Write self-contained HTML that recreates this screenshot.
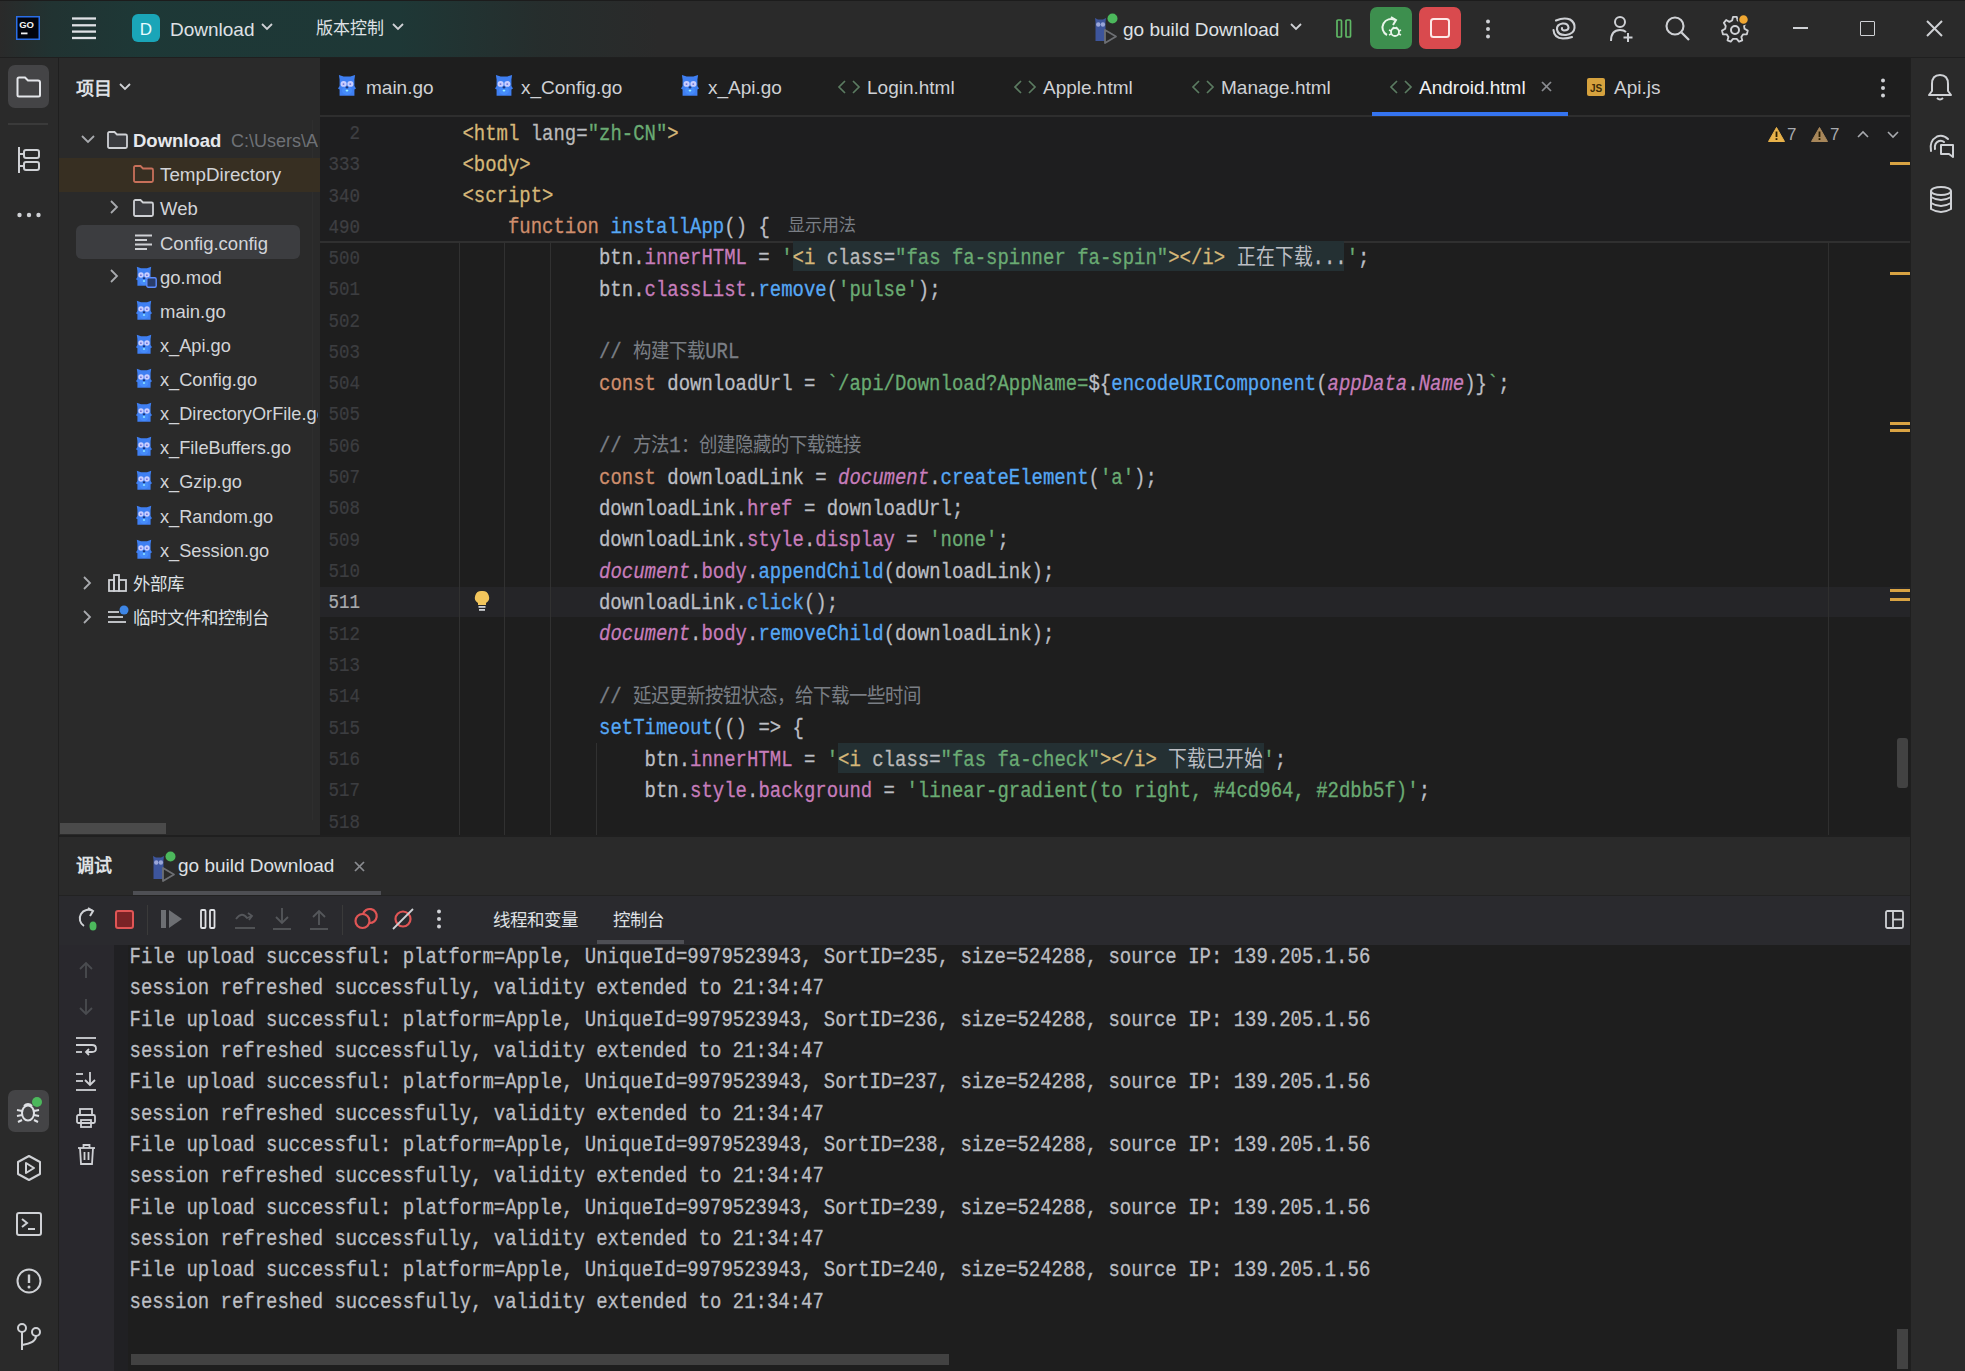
<!DOCTYPE html>
<html lang="zh-CN">
<head>
<meta charset="utf-8">
<style>
*{box-sizing:border-box;margin:0;padding:0}
html,body{width:1965px;height:1371px;overflow:hidden;background:#2a2a2a;font-family:"Liberation Sans",sans-serif;color:#dfe1e5}
.a{position:absolute}
.ui{white-space:nowrap;line-height:1}
.mono{position:absolute;font-family:"Liberation Mono",monospace;font-size:18.98px;white-space:pre;line-height:31px;height:31px;transform:scaleY(1.13);transform-origin:0 19.5px;-webkit-text-stroke:0.25px currentColor}
.mono span{-webkit-text-stroke:0.25px currentColor}
.cjk{font-size:18.4px;-webkit-text-stroke:0 !important}
svg{position:absolute;overflow:visible}
.i{font-style:italic}
</style>
</head>
<body>

<div class="a" style="left:0px;top:0px;width:1965px;height:57px;background:#2a2a2a;"></div>
<div class="a" style="left:0;top:0;width:700px;height:57px;background:linear-gradient(90deg, rgba(42,42,42,0) 0px, rgba(26,58,56,0.55) 50px, rgba(26,60,58,0.78) 140px, rgba(26,60,58,0.75) 400px, rgba(30,52,50,0.35) 540px, rgba(42,42,42,0) 660px)"></div>
<div class="a" style="left:0px;top:0px;width:1965px;height:1px;background:#1c1c1c;"></div>
<div class="a" style="left:0px;top:57px;width:1965px;height:1px;background:#1f1f1f;"></div>
<svg style="left:16px;top:16px;" width="24" height="24" viewBox="0 0 24 24"><rect x="0.75" y="0.75" width="22.5" height="22.5" fill="#02040c" stroke="#2a6ee8" stroke-width="1.5"/><text x="3.2" y="12" font-family="Liberation Sans" font-weight="bold" font-size="9.5" fill="#f2f2f2">GO</text><rect x="5" y="16.5" width="6.5" height="1.8" fill="#f2f2f2"/></svg>
<svg style="left:72px;top:17px;" width="24" height="22" viewBox="0 0 24 22"><g stroke="#dfe1e5" stroke-width="2.3"><line x1="0" y1="1.5" x2="24" y2="1.5"/><line x1="0" y1="8.3" x2="24" y2="8.3"/><line x1="0" y1="14.6" x2="24" y2="14.6"/><line x1="0" y1="21" x2="24" y2="21"/></g></svg>
<svg style="left:132px;top:14px;" width="28" height="28" viewBox="0 0 28 28"><rect x="0" y="0" width="28" height="28" rx="6" fill="#1aa5b8"/><text x="14" y="21" text-anchor="middle" font-family="Liberation Sans" font-size="17" fill="#e8fbff">D</text></svg>
<div class="a ui" style="left:170px;top:20px;font-size:19px;color:#dfe1e5;font-weight:normal;">Download</div>
<svg style="left:261px;top:23px;" width="12" height="8" viewBox="0 0 12 8"><polyline points="1,1 6,6 11,1" fill="none" stroke="#cfd1d5" stroke-width="1.8"/></svg>
<div class="a ui" style="left:316px;top:20px;font-size:17px;color:#dfe1e5;font-weight:normal;">版本控制</div>
<svg style="left:392px;top:23px;" width="12" height="8" viewBox="0 0 12 8"><polyline points="1,1 6,6 11,1" fill="none" stroke="#cfd1d5" stroke-width="1.8"/></svg>
<svg style="left:1092px;top:13px;" width="28" height="30" viewBox="0 0 28 30"><path d="M3 5 L6 6.5 L11 6.5 L14 5 L13.5 9 L13.5 28 L3.5 28 L3.5 9 Z" fill="#3d559c"/><circle cx="6.3" cy="11.5" r="2.2" fill="#9aa6d8"/><circle cx="10.9" cy="11.5" r="2.2" fill="#9aa6d8"/><path d="M13 17 L24 23.5 L13 30Z" fill="#2a2a2a" stroke="#6d6f73" stroke-width="1.8" stroke-linejoin="round"/><circle cx="20.5" cy="5.5" r="5" fill="#4cb85c"/></svg>
<div class="a ui" style="left:1123px;top:20px;font-size:19px;color:#dfe1e5;font-weight:normal;">go build Download</div>
<svg style="left:1290px;top:23px;" width="12" height="8" viewBox="0 0 12 8"><polyline points="1,1 6,6 11,1" fill="none" stroke="#cfd1d5" stroke-width="1.8"/></svg>
<svg style="left:1336px;top:19px;" width="16" height="19" viewBox="0 0 16 19"><rect x="1" y="1" width="4.5" height="17" rx="1" fill="none" stroke="#5fb865" stroke-width="1.7"/><rect x="10" y="1" width="4.5" height="17" rx="1" fill="none" stroke="#5fb865" stroke-width="1.7"/></svg>
<div class="a" style="left:1370px;top:7px;width:42px;height:42px;border-radius:7px;background:#3d8f4e"></div>
<svg style="left:1378px;top:15px;" width="26" height="26" viewBox="0 0 26 26"><path d="M17 5 A8.5 8.5 0 1 0 9 20" fill="none" stroke="#e9f5ea" stroke-width="2"/><polyline points="13,2 18,5 15,10" fill="none" stroke="#e9f5ea" stroke-width="2"/><circle cx="17" cy="17" r="4" fill="none" stroke="#e9f5ea" stroke-width="1.8"/><g stroke="#e9f5ea" stroke-width="1.5"><line x1="11" y1="15" x2="13" y2="16"/><line x1="21" y1="16" x2="23" y2="15"/><line x1="11" y1="20" x2="13" y2="19"/><line x1="21" y1="19" x2="23" y2="20"/><line x1="15" y1="12" x2="16" y2="13.5"/><line x1="19" y1="12" x2="18" y2="13.5"/></g></svg>
<div class="a" style="left:1419px;top:7px;width:42px;height:42px;border-radius:7px;background:#d94a4e"></div>
<svg style="left:1430px;top:18px;" width="20" height="20" viewBox="0 0 20 20"><rect x="1" y="1" width="18" height="18" rx="2.5" fill="none" stroke="#fde8e8" stroke-width="2"/></svg>
<svg style="left:1485px;top:19px;" width="6" height="20" viewBox="0 0 6 20"><g fill="#cfd1d5"><circle cx="3" cy="2.5" r="2"/><circle cx="3" cy="10" r="2"/><circle cx="3" cy="17.5" r="2"/></g></svg>
<svg style="left:1552px;top:17px;" width="24" height="23" viewBox="0 0 24 23"><path d="M4 3.5 Q12 0 18 2.5 Q23 5.5 22.5 11 Q22 17 14 18 Q6 18.5 5 12.5 Q4.5 7.5 10.5 6.5 Q16 6 16.5 10.5 Q16.5 13.5 12 13.5 Q9.5 13 10 11" fill="none" stroke="#cfd1d5" stroke-width="2.1" stroke-linecap="round"/><path d="M1.5 13 Q2 21 11 21.5 Q16 21.5 20 20" fill="none" stroke="#cfd1d5" stroke-width="2.1" stroke-linecap="round"/></svg>
<svg style="left:1609px;top:15px;" width="28" height="28" viewBox="0 0 28 28"><circle cx="11" cy="7" r="5" fill="none" stroke="#cfd1d5" stroke-width="2"/><path d="M2 26 Q2 15 11 15 Q15 15 17 17" fill="none" stroke="#cfd1d5" stroke-width="2"/><line x1="19" y1="18" x2="19" y2="27" stroke="#cfd1d5" stroke-width="2"/><line x1="14.5" y1="22.5" x2="23.5" y2="22.5" stroke="#cfd1d5" stroke-width="2"/></svg>
<svg style="left:1665px;top:16px;" width="26" height="26" viewBox="0 0 26 26"><circle cx="10" cy="10" r="8.5" fill="none" stroke="#cfd1d5" stroke-width="2.1"/><line x1="16.5" y1="16.5" x2="24" y2="24" stroke="#cfd1d5" stroke-width="2.3"/></svg>
<svg style="left:1721px;top:15px;" width="28" height="28" viewBox="0 0 28 28"><path d="M12 2 L16 2 L17 6 L20 7.5 L23.5 5.5 L26 8.5 L24 12 L24.5 15 L28 17 L27 21 L23 21 L21 24 L22 27.5 L18.5 29 L16 26 L12 26 L9.5 29 L6 27.5 L7 24 L5 21 L1 21 L0 17 L3.5 15 L4 12 L2 8.5 L4.5 5.5 L8 7.5 L11 6 Z" transform="translate(1,0) scale(0.92)" fill="none" stroke="#cfd1d5" stroke-width="2" stroke-linejoin="round"/><circle cx="14" cy="15" r="4" fill="none" stroke="#cfd1d5" stroke-width="2"/><circle cx="22.5" cy="4.5" r="5" fill="#f0a732" stroke="#2a2a2a" stroke-width="1.5"/></svg>
<div class="a" style="left:1793px;top:27px;width:15px;height:2px;background:#cfd1d5;"></div>
<div class="a" style="left:1860px;top:21px;width:15px;height:15px;border:1.8px solid #cfd1d5;border-radius:1px"></div>
<svg style="left:1926px;top:20px;" width="17" height="17" viewBox="0 0 17 17"><line x1="1" y1="1" x2="16" y2="16" stroke="#cfd1d5" stroke-width="2"/><line x1="16" y1="1" x2="1" y2="16" stroke="#cfd1d5" stroke-width="2"/></svg>
<div class="a" style="left:0px;top:58px;width:58px;height:1313px;background:#2a2a2a;"></div>
<div class="a" style="left:58px;top:58px;width:1px;height:1313px;background:#1f1f1f;"></div>
<div class="a" style="left:8px;top:65px;width:41px;height:43px;border-radius:7px;background:#444446"></div>
<svg style="left:16px;top:76px;" width="26" height="22" viewBox="0 0 26 22"><path d="M1.5 3 Q1.5 1.5 3 1.5 L9 1.5 L12 4.5 L22 4.5 Q24 4.5 24 6.5 L24 19 Q24 20.5 22.5 20.5 L3 20.5 Q1.5 20.5 1.5 19 Z" fill="none" stroke="#e4e6ea" stroke-width="2"/></svg>
<div class="a" style="left:8px;top:123px;width:40px;height:2px;background:#3a3a3a;"></div>
<svg style="left:17px;top:146px;" width="24" height="28" viewBox="0 0 24 28"><g fill="none" stroke="#cfd1d5" stroke-width="2"><line x1="2" y1="1" x2="2" y2="27"/><line x1="2" y1="8" x2="7" y2="8"/><line x1="2" y1="20" x2="7" y2="20"/><rect x="7" y="4" width="15" height="8" rx="2"/><rect x="7" y="16" width="15" height="8" rx="2"/></g></svg>
<svg style="left:17px;top:212px;" width="24" height="6" viewBox="0 0 24 6"><g fill="#cfd1d5"><circle cx="2.5" cy="3" r="2.2"/><circle cx="12" cy="3" r="2.2"/><circle cx="21.5" cy="3" r="2.2"/></g></svg>
<div class="a" style="left:8px;top:1090px;width:41px;height:42px;border-radius:7px;background:#444446"></div>
<svg style="left:15px;top:1098px;" width="28" height="26" viewBox="0 0 28 26"><g fill="none" stroke="#dfe1e5" stroke-width="2"><ellipse cx="13" cy="15" rx="6" ry="7.5"/><path d="M9 8 Q13 4 17 8"/><line x1="2" y1="12" x2="7" y2="13"/><line x1="2" y1="18" x2="7" y2="17"/><line x1="19" y1="13" x2="24" y2="12"/><line x1="19" y1="17" x2="24" y2="18"/><line x1="7" y1="22" x2="3" y2="24"/><line x1="19" y1="22" x2="23" y2="24"/></g><circle cx="22" cy="4" r="5" fill="#4cb85c"/></svg>
<svg style="left:15px;top:1154px;" width="28" height="28" viewBox="0 0 28 28"><path d="M14 2 L25 8 L25 20 L14 26 L3 20 L3 8 Z" transform="rotate(0)" fill="none" stroke="#cfd1d5" stroke-width="2" stroke-linejoin="round"/><path d="M11 9 L19 14 L11 19 Z" fill="none" stroke="#cfd1d5" stroke-width="2" stroke-linejoin="round"/></svg>
<svg style="left:16px;top:1212px;" width="26" height="24" viewBox="0 0 26 24"><rect x="1" y="1" width="24" height="22" rx="2" fill="none" stroke="#cfd1d5" stroke-width="2"/><polyline points="6,7 11,11 6,15" fill="none" stroke="#cfd1d5" stroke-width="2"/><line x1="12" y1="17" x2="19" y2="17" stroke="#cfd1d5" stroke-width="2"/></svg>
<svg style="left:16px;top:1268px;" width="26" height="26" viewBox="0 0 26 26"><circle cx="13" cy="13" r="11.5" fill="none" stroke="#cfd1d5" stroke-width="2"/><line x1="13" y1="6.5" x2="13" y2="15" stroke="#cfd1d5" stroke-width="2.4"/><circle cx="13" cy="19" r="1.5" fill="#cfd1d5"/></svg>
<svg style="left:17px;top:1323px;" width="26" height="28" viewBox="0 0 26 28"><g fill="none" stroke="#cfd1d5" stroke-width="2"><circle cx="5" cy="5" r="4"/><circle cx="19" cy="9" r="4"/><line x1="5" y1="9" x2="5" y2="27"/><path d="M19 13 Q19 20 5 22"/></g></svg>
<div class="a" style="left:59px;top:58px;width:261px;height:777px;background:#2a2a2a;"></div>
<div class="a" style="left:312px;top:120px;width:1px;height:700px;background:#2e2e2e;"></div>
<div class="a ui" style="left:76px;top:80px;font-size:18px;color:#dfe1e5;font-weight:bold;">项目</div>
<svg style="left:119px;top:83px;" width="12" height="8" viewBox="0 0 12 8"><polyline points="1,1 6,6 11,1" fill="none" stroke="#cfd1d5" stroke-width="1.8"/></svg>
<div class="a" style="left:59px;top:158px;width:261px;height:34px;background:#372f22;"></div>
<div class="a" style="left:76px;top:225px;width:224px;height:34px;border-radius:6px;background:#3c3d40"></div>
<svg style="left:81px;top:135px;" width="14" height="9" viewBox="0 0 14 9"><polyline points="1,1 7,7 13,1" fill="none" stroke="#a8aaae" stroke-width="1.8"/></svg>
<svg style="left:107px;top:131px;" width="21" height="18" viewBox="0 0 21 18"><path d="M1 2.5 Q1 1 2.5 1 L7.5 1 L10 3.5 L18.5 3.5 Q20 3.5 20 5 L20 15.5 Q20 17 18.5 17 L2.5 17 Q1 17 1 15.5 Z" fill="#3a3b3f" stroke="#cfd1d5" stroke-width="1.8"/></svg>
<div class="a ui" style="left:133px;top:131.5px;font-size:18.5px;color:#e6e8ec;font-weight:bold;">Download</div>
<div class="a ui" style="left:231px;top:131.5px;font-size:18px;color:#6f7277;font-weight:normal;width:87px;overflow:hidden;padding-bottom:6px;">C:\Users\Administrator</div>
<svg style="left:133px;top:165px;" width="21" height="18" viewBox="0 0 21 18"><path d="M1 2.5 Q1 1 2.5 1 L7.5 1 L10 3.5 L18.5 3.5 Q20 3.5 20 5 L20 15.5 Q20 17 18.5 17 L2.5 17 Q1 17 1 15.5 Z" fill="#372f22" stroke="#c8705a" stroke-width="1.8"/></svg>
<div class="a ui" style="left:160px;top:166px;font-size:18.8px;color:#d2d4d8;font-weight:normal;">TempDirectory</div>
<svg style="left:110px;top:200px;" width="9" height="14" viewBox="0 0 9 14"><polyline points="1,1 7,7 1,13" fill="none" stroke="#a8aaae" stroke-width="1.8"/></svg>
<svg style="left:133px;top:199px;" width="21" height="18" viewBox="0 0 21 18"><path d="M1 2.5 Q1 1 2.5 1 L7.5 1 L10 3.5 L18.5 3.5 Q20 3.5 20 5 L20 15.5 Q20 17 18.5 17 L2.5 17 Q1 17 1 15.5 Z" fill="#3a3b3f" stroke="#cfd1d5" stroke-width="1.8"/></svg>
<div class="a ui" style="left:160px;top:199.5px;font-size:18.5px;color:#d2d4d8;font-weight:normal;">Web</div>
<svg style="left:135px;top:234px;" width="18" height="17" viewBox="0 0 18 17"><g stroke="#cfd1d5" stroke-width="2"><line x1="0" y1="1.5" x2="17" y2="1.5"/><line x1="0" y1="6" x2="12" y2="6"/><line x1="0" y1="10.5" x2="17" y2="10.5"/><line x1="0" y1="15" x2="12" y2="15"/></g></svg>
<div class="a ui" style="left:160px;top:234.5px;font-size:18.5px;color:#d2d4d8;font-weight:normal;">Config.config</div>
<svg style="left:136px;top:266px" width="16" height="20" viewBox="0 0 16 20" preserveAspectRatio="none"><path d="M0.8 0.8 L5 2.2 L11 2.2 L15.2 0.8 L14.6 5 L14.6 11 L16 13.2 L14.6 14.2 L14.6 19.8 L1.4 19.8 L1.4 14.2 L0 13.2 L1.4 11 L1.4 5 Z" fill="#3f7ff2"/><ellipse cx="8" cy="15" rx="4.5" ry="4" fill="#4a92ff" opacity="0.6"/><circle cx="5" cy="9" r="2.7" fill="#c9ceff"/><circle cx="11" cy="9" r="2.7" fill="#c9ceff"/><circle cx="4.9" cy="9.2" r="0.9" fill="#7074d8"/><circle cx="10.9" cy="9.2" r="0.9" fill="#7074d8"/><ellipse cx="8" cy="12.2" rx="1.3" ry="1" fill="#1d3479"/><rect x="6.8" y="14.3" width="2.4" height="1.5" rx="0.7" fill="#9af2ff"/></svg>
<svg style="left:110px;top:269px;" width="9" height="14" viewBox="0 0 9 14"><polyline points="1,1 7,7 1,13" fill="none" stroke="#a8aaae" stroke-width="1.8"/></svg>
<svg style="left:146px;top:277px;" width="11" height="11" viewBox="0 0 11 11"><rect x="0.8" y="0.8" width="9.4" height="9.4" rx="1.5" fill="#2a3d6a" stroke="#5b8cff" stroke-width="1.4"/></svg>
<div class="a ui" style="left:160px;top:268.5px;font-size:18.5px;color:#d2d4d8;font-weight:normal;width:158px;overflow:hidden;padding-bottom:6px;">go.mod</div>
<svg style="left:136px;top:300px" width="16" height="20" viewBox="0 0 16 20" preserveAspectRatio="none"><path d="M0.8 0.8 L5 2.2 L11 2.2 L15.2 0.8 L14.6 5 L14.6 11 L16 13.2 L14.6 14.2 L14.6 19.8 L1.4 19.8 L1.4 14.2 L0 13.2 L1.4 11 L1.4 5 Z" fill="#3f7ff2"/><ellipse cx="8" cy="15" rx="4.5" ry="4" fill="#4a92ff" opacity="0.6"/><circle cx="5" cy="9" r="2.7" fill="#c9ceff"/><circle cx="11" cy="9" r="2.7" fill="#c9ceff"/><circle cx="4.9" cy="9.2" r="0.9" fill="#7074d8"/><circle cx="10.9" cy="9.2" r="0.9" fill="#7074d8"/><ellipse cx="8" cy="12.2" rx="1.3" ry="1" fill="#1d3479"/><rect x="6.8" y="14.3" width="2.4" height="1.5" rx="0.7" fill="#9af2ff"/></svg>
<div class="a ui" style="left:160px;top:302.5px;font-size:18.5px;color:#d2d4d8;font-weight:normal;width:158px;overflow:hidden;padding-bottom:6px;">main.go</div>
<svg style="left:136px;top:334px" width="16" height="20" viewBox="0 0 16 20" preserveAspectRatio="none"><path d="M0.8 0.8 L5 2.2 L11 2.2 L15.2 0.8 L14.6 5 L14.6 11 L16 13.2 L14.6 14.2 L14.6 19.8 L1.4 19.8 L1.4 14.2 L0 13.2 L1.4 11 L1.4 5 Z" fill="#3f7ff2"/><ellipse cx="8" cy="15" rx="4.5" ry="4" fill="#4a92ff" opacity="0.6"/><circle cx="5" cy="9" r="2.7" fill="#c9ceff"/><circle cx="11" cy="9" r="2.7" fill="#c9ceff"/><circle cx="4.9" cy="9.2" r="0.9" fill="#7074d8"/><circle cx="10.9" cy="9.2" r="0.9" fill="#7074d8"/><ellipse cx="8" cy="12.2" rx="1.3" ry="1" fill="#1d3479"/><rect x="6.8" y="14.3" width="2.4" height="1.5" rx="0.7" fill="#9af2ff"/></svg>
<div class="a ui" style="left:160px;top:336.5px;font-size:18.2px;color:#d2d4d8;font-weight:normal;width:158px;overflow:hidden;padding-bottom:6px;">x_Api.go</div>
<svg style="left:136px;top:368px" width="16" height="20" viewBox="0 0 16 20" preserveAspectRatio="none"><path d="M0.8 0.8 L5 2.2 L11 2.2 L15.2 0.8 L14.6 5 L14.6 11 L16 13.2 L14.6 14.2 L14.6 19.8 L1.4 19.8 L1.4 14.2 L0 13.2 L1.4 11 L1.4 5 Z" fill="#3f7ff2"/><ellipse cx="8" cy="15" rx="4.5" ry="4" fill="#4a92ff" opacity="0.6"/><circle cx="5" cy="9" r="2.7" fill="#c9ceff"/><circle cx="11" cy="9" r="2.7" fill="#c9ceff"/><circle cx="4.9" cy="9.2" r="0.9" fill="#7074d8"/><circle cx="10.9" cy="9.2" r="0.9" fill="#7074d8"/><ellipse cx="8" cy="12.2" rx="1.3" ry="1" fill="#1d3479"/><rect x="6.8" y="14.3" width="2.4" height="1.5" rx="0.7" fill="#9af2ff"/></svg>
<div class="a ui" style="left:160px;top:370.5px;font-size:18.2px;color:#d2d4d8;font-weight:normal;width:158px;overflow:hidden;padding-bottom:6px;">x_Config.go</div>
<svg style="left:136px;top:402px" width="16" height="20" viewBox="0 0 16 20" preserveAspectRatio="none"><path d="M0.8 0.8 L5 2.2 L11 2.2 L15.2 0.8 L14.6 5 L14.6 11 L16 13.2 L14.6 14.2 L14.6 19.8 L1.4 19.8 L1.4 14.2 L0 13.2 L1.4 11 L1.4 5 Z" fill="#3f7ff2"/><ellipse cx="8" cy="15" rx="4.5" ry="4" fill="#4a92ff" opacity="0.6"/><circle cx="5" cy="9" r="2.7" fill="#c9ceff"/><circle cx="11" cy="9" r="2.7" fill="#c9ceff"/><circle cx="4.9" cy="9.2" r="0.9" fill="#7074d8"/><circle cx="10.9" cy="9.2" r="0.9" fill="#7074d8"/><ellipse cx="8" cy="12.2" rx="1.3" ry="1" fill="#1d3479"/><rect x="6.8" y="14.3" width="2.4" height="1.5" rx="0.7" fill="#9af2ff"/></svg>
<div class="a ui" style="left:160px;top:404.5px;font-size:18.2px;color:#d2d4d8;font-weight:normal;width:158px;overflow:hidden;padding-bottom:6px;">x_DirectoryOrFile.go</div>
<svg style="left:136px;top:436px" width="16" height="20" viewBox="0 0 16 20" preserveAspectRatio="none"><path d="M0.8 0.8 L5 2.2 L11 2.2 L15.2 0.8 L14.6 5 L14.6 11 L16 13.2 L14.6 14.2 L14.6 19.8 L1.4 19.8 L1.4 14.2 L0 13.2 L1.4 11 L1.4 5 Z" fill="#3f7ff2"/><ellipse cx="8" cy="15" rx="4.5" ry="4" fill="#4a92ff" opacity="0.6"/><circle cx="5" cy="9" r="2.7" fill="#c9ceff"/><circle cx="11" cy="9" r="2.7" fill="#c9ceff"/><circle cx="4.9" cy="9.2" r="0.9" fill="#7074d8"/><circle cx="10.9" cy="9.2" r="0.9" fill="#7074d8"/><ellipse cx="8" cy="12.2" rx="1.3" ry="1" fill="#1d3479"/><rect x="6.8" y="14.3" width="2.4" height="1.5" rx="0.7" fill="#9af2ff"/></svg>
<div class="a ui" style="left:160px;top:438.5px;font-size:18.2px;color:#d2d4d8;font-weight:normal;width:158px;overflow:hidden;padding-bottom:6px;">x_FileBuffers.go</div>
<svg style="left:136px;top:470px" width="16" height="20" viewBox="0 0 16 20" preserveAspectRatio="none"><path d="M0.8 0.8 L5 2.2 L11 2.2 L15.2 0.8 L14.6 5 L14.6 11 L16 13.2 L14.6 14.2 L14.6 19.8 L1.4 19.8 L1.4 14.2 L0 13.2 L1.4 11 L1.4 5 Z" fill="#3f7ff2"/><ellipse cx="8" cy="15" rx="4.5" ry="4" fill="#4a92ff" opacity="0.6"/><circle cx="5" cy="9" r="2.7" fill="#c9ceff"/><circle cx="11" cy="9" r="2.7" fill="#c9ceff"/><circle cx="4.9" cy="9.2" r="0.9" fill="#7074d8"/><circle cx="10.9" cy="9.2" r="0.9" fill="#7074d8"/><ellipse cx="8" cy="12.2" rx="1.3" ry="1" fill="#1d3479"/><rect x="6.8" y="14.3" width="2.4" height="1.5" rx="0.7" fill="#9af2ff"/></svg>
<div class="a ui" style="left:160px;top:472.5px;font-size:18.2px;color:#d2d4d8;font-weight:normal;width:158px;overflow:hidden;padding-bottom:6px;">x_Gzip.go</div>
<svg style="left:136px;top:505px" width="16" height="20" viewBox="0 0 16 20" preserveAspectRatio="none"><path d="M0.8 0.8 L5 2.2 L11 2.2 L15.2 0.8 L14.6 5 L14.6 11 L16 13.2 L14.6 14.2 L14.6 19.8 L1.4 19.8 L1.4 14.2 L0 13.2 L1.4 11 L1.4 5 Z" fill="#3f7ff2"/><ellipse cx="8" cy="15" rx="4.5" ry="4" fill="#4a92ff" opacity="0.6"/><circle cx="5" cy="9" r="2.7" fill="#c9ceff"/><circle cx="11" cy="9" r="2.7" fill="#c9ceff"/><circle cx="4.9" cy="9.2" r="0.9" fill="#7074d8"/><circle cx="10.9" cy="9.2" r="0.9" fill="#7074d8"/><ellipse cx="8" cy="12.2" rx="1.3" ry="1" fill="#1d3479"/><rect x="6.8" y="14.3" width="2.4" height="1.5" rx="0.7" fill="#9af2ff"/></svg>
<div class="a ui" style="left:160px;top:507.5px;font-size:18.2px;color:#d2d4d8;font-weight:normal;width:158px;overflow:hidden;padding-bottom:6px;">x_Random.go</div>
<svg style="left:136px;top:539px" width="16" height="20" viewBox="0 0 16 20" preserveAspectRatio="none"><path d="M0.8 0.8 L5 2.2 L11 2.2 L15.2 0.8 L14.6 5 L14.6 11 L16 13.2 L14.6 14.2 L14.6 19.8 L1.4 19.8 L1.4 14.2 L0 13.2 L1.4 11 L1.4 5 Z" fill="#3f7ff2"/><ellipse cx="8" cy="15" rx="4.5" ry="4" fill="#4a92ff" opacity="0.6"/><circle cx="5" cy="9" r="2.7" fill="#c9ceff"/><circle cx="11" cy="9" r="2.7" fill="#c9ceff"/><circle cx="4.9" cy="9.2" r="0.9" fill="#7074d8"/><circle cx="10.9" cy="9.2" r="0.9" fill="#7074d8"/><ellipse cx="8" cy="12.2" rx="1.3" ry="1" fill="#1d3479"/><rect x="6.8" y="14.3" width="2.4" height="1.5" rx="0.7" fill="#9af2ff"/></svg>
<div class="a ui" style="left:160px;top:541.5px;font-size:18.2px;color:#d2d4d8;font-weight:normal;width:158px;overflow:hidden;padding-bottom:6px;">x_Session.go</div>
<svg style="left:83px;top:576px;" width="9" height="14" viewBox="0 0 9 14"><polyline points="1,1 7,7 1,13" fill="none" stroke="#a8aaae" stroke-width="1.8"/></svg>
<svg style="left:108px;top:574px;" width="20" height="18" viewBox="0 0 20 18"><g fill="none" stroke="#cfd1d5" stroke-width="1.8"><rect x="1" y="6" width="5" height="11"/><rect x="6" y="1" width="5" height="16"/><rect x="11" y="6" width="7" height="11"/></g></svg>
<div class="a ui" style="left:133px;top:575.5px;font-size:17.5px;color:#dfe1e5;font-weight:normal;">外部库</div>
<svg style="left:83px;top:610px;" width="9" height="14" viewBox="0 0 9 14"><polyline points="1,1 7,7 1,13" fill="none" stroke="#a8aaae" stroke-width="1.8"/></svg>
<svg style="left:108px;top:605px;" width="22" height="20" viewBox="0 0 22 20"><g stroke="#cfd1d5" stroke-width="1.8"><line x1="0" y1="7" x2="11" y2="7"/><line x1="0" y1="12" x2="15" y2="12"/><line x1="0" y1="17" x2="18" y2="17"/></g><circle cx="16" cy="5" r="4.5" fill="#3e86e6"/></svg>
<div class="a ui" style="left:133px;top:609.5px;font-size:17.5px;color:#dfe1e5;font-weight:normal;">临时文件和控制台</div>
<div class="a" style="left:60px;top:823px;width:106px;height:11px;background:#4a4a4a"></div>
<div class="a" style="left:320px;top:58px;width:1590px;height:58px;background:#1e1e1e;"></div>
<div class="a" style="left:320px;top:115px;width:1590px;height:2px;background:#2e2e2e;"></div>
<svg style="left:338px;top:74px" width="18" height="22" viewBox="0 0 16 20" preserveAspectRatio="none"><path d="M0.8 0.8 L5 2.2 L11 2.2 L15.2 0.8 L14.6 5 L14.6 11 L16 13.2 L14.6 14.2 L14.6 19.8 L1.4 19.8 L1.4 14.2 L0 13.2 L1.4 11 L1.4 5 Z" fill="#3f7ff2"/><ellipse cx="8" cy="15" rx="4.5" ry="4" fill="#4a92ff" opacity="0.6"/><circle cx="5" cy="9" r="2.7" fill="#c9ceff"/><circle cx="11" cy="9" r="2.7" fill="#c9ceff"/><circle cx="4.9" cy="9.2" r="0.9" fill="#7074d8"/><circle cx="10.9" cy="9.2" r="0.9" fill="#7074d8"/><ellipse cx="8" cy="12.2" rx="1.3" ry="1" fill="#1d3479"/><rect x="6.8" y="14.3" width="2.4" height="1.5" rx="0.7" fill="#9af2ff"/></svg>
<div class="a ui" style="left:366px;top:78px;font-size:19px;color:#cfd1d5;font-weight:normal;">main.go</div>
<svg style="left:495px;top:74px" width="18" height="22" viewBox="0 0 16 20" preserveAspectRatio="none"><path d="M0.8 0.8 L5 2.2 L11 2.2 L15.2 0.8 L14.6 5 L14.6 11 L16 13.2 L14.6 14.2 L14.6 19.8 L1.4 19.8 L1.4 14.2 L0 13.2 L1.4 11 L1.4 5 Z" fill="#3f7ff2"/><ellipse cx="8" cy="15" rx="4.5" ry="4" fill="#4a92ff" opacity="0.6"/><circle cx="5" cy="9" r="2.7" fill="#c9ceff"/><circle cx="11" cy="9" r="2.7" fill="#c9ceff"/><circle cx="4.9" cy="9.2" r="0.9" fill="#7074d8"/><circle cx="10.9" cy="9.2" r="0.9" fill="#7074d8"/><ellipse cx="8" cy="12.2" rx="1.3" ry="1" fill="#1d3479"/><rect x="6.8" y="14.3" width="2.4" height="1.5" rx="0.7" fill="#9af2ff"/></svg>
<div class="a ui" style="left:521px;top:78px;font-size:19px;color:#cfd1d5;font-weight:normal;">x_Config.go</div>
<svg style="left:681px;top:74px" width="18" height="22" viewBox="0 0 16 20" preserveAspectRatio="none"><path d="M0.8 0.8 L5 2.2 L11 2.2 L15.2 0.8 L14.6 5 L14.6 11 L16 13.2 L14.6 14.2 L14.6 19.8 L1.4 19.8 L1.4 14.2 L0 13.2 L1.4 11 L1.4 5 Z" fill="#3f7ff2"/><ellipse cx="8" cy="15" rx="4.5" ry="4" fill="#4a92ff" opacity="0.6"/><circle cx="5" cy="9" r="2.7" fill="#c9ceff"/><circle cx="11" cy="9" r="2.7" fill="#c9ceff"/><circle cx="4.9" cy="9.2" r="0.9" fill="#7074d8"/><circle cx="10.9" cy="9.2" r="0.9" fill="#7074d8"/><ellipse cx="8" cy="12.2" rx="1.3" ry="1" fill="#1d3479"/><rect x="6.8" y="14.3" width="2.4" height="1.5" rx="0.7" fill="#9af2ff"/></svg>
<div class="a ui" style="left:708px;top:78px;font-size:19px;color:#cfd1d5;font-weight:normal;">x_Api.go</div>
<svg style="left:838px;top:80px;" width="22" height="14" viewBox="0 0 22 14"><g fill="none" stroke="#5b7b61" stroke-width="1.7"><polyline points="7,1 1,7 7,13"/><polyline points="15,1 21,7 15,13"/></g></svg>
<div class="a ui" style="left:867px;top:78px;font-size:19px;color:#cfd1d5;font-weight:normal;">Login.html</div>
<svg style="left:1014px;top:80px;" width="22" height="14" viewBox="0 0 22 14"><g fill="none" stroke="#5b7b61" stroke-width="1.7"><polyline points="7,1 1,7 7,13"/><polyline points="15,1 21,7 15,13"/></g></svg>
<div class="a ui" style="left:1043px;top:78px;font-size:19px;color:#cfd1d5;font-weight:normal;">Apple.html</div>
<svg style="left:1192px;top:80px;" width="22" height="14" viewBox="0 0 22 14"><g fill="none" stroke="#5b7b61" stroke-width="1.7"><polyline points="7,1 1,7 7,13"/><polyline points="15,1 21,7 15,13"/></g></svg>
<div class="a ui" style="left:1221px;top:78px;font-size:19px;color:#cfd1d5;font-weight:normal;">Manage.html</div>
<svg style="left:1390px;top:80px;" width="22" height="14" viewBox="0 0 22 14"><g fill="none" stroke="#5b7b61" stroke-width="1.7"><polyline points="7,1 1,7 7,13"/><polyline points="15,1 21,7 15,13"/></g></svg>
<div class="a ui" style="left:1419px;top:78px;font-size:19px;color:#f0f1f3;font-weight:normal;">Android.html</div>
<svg style="left:1587px;top:78px;" width="18" height="18" viewBox="0 0 18 18"><rect x="0" y="0" width="18" height="18" rx="2" fill="#d6a23e"/><text x="9" y="14" text-anchor="middle" font-family="Liberation Sans" font-weight="bold" font-size="10" fill="#3b2a08">JS</text></svg>
<div class="a ui" style="left:1614px;top:78px;font-size:19px;color:#cfd1d5;font-weight:normal;">Api.js</div>
<svg style="left:1541px;top:81px;" width="11" height="11" viewBox="0 0 11 11"><line x1="1" y1="1" x2="10" y2="10" stroke="#8a8c90" stroke-width="1.7"/><line x1="10" y1="1" x2="1" y2="10" stroke="#8a8c90" stroke-width="1.7"/></svg>
<div class="a" style="left:1372px;top:112px;width:196px;height:4px;background:#3574f0;"></div>
<svg style="left:1880px;top:78px;" width="6" height="20" viewBox="0 0 6 20"><g fill="#cfd1d5"><circle cx="3" cy="2.5" r="2"/><circle cx="3" cy="10" r="2"/><circle cx="3" cy="17.5" r="2"/></g></svg>
<div class="a" style="left:320px;top:117px;width:1590px;height:718px;background:#1e1e1e;"></div>
<div class="a" style="left:320px;top:587px;width:1590px;height:30px;background:#252528;"></div>
<div class="a" style="left:320px;top:117px;width:1590px;height:124px;background:#1e1e1f;"></div>
<div class="a" style="left:320px;top:241px;width:1590px;height:2px;background:#303030;"></div>
<div class="a" style="left:300px;top:119.00px;width:60px;text-align:right;font-family:'Liberation Mono',monospace;font-size:17.5px;line-height:31px;color:#3e3f42;transform:scaleY(1.13);transform-origin:0 19.5px;-webkit-text-stroke:0.2px currentColor">2</div>
<div class="mono" style="left:462.40px;top:119.50px"><span style="color:#d5b778">&lt;html</span><span style="color:#bababa"> lang</span><span style="color:#bcbec4">=</span><span style="color:#6aab73">&quot;zh-CN&quot;</span><span style="color:#d5b778">&gt;</span></div>
<div class="a" style="left:300px;top:150.33px;width:60px;text-align:right;font-family:'Liberation Mono',monospace;font-size:17.5px;line-height:31px;color:#3e3f42;transform:scaleY(1.13);transform-origin:0 19.5px;-webkit-text-stroke:0.2px currentColor">333</div>
<div class="mono" style="left:462.40px;top:150.83px"><span style="color:#d5b778">&lt;body&gt;</span></div>
<div class="a" style="left:300px;top:181.66px;width:60px;text-align:right;font-family:'Liberation Mono',monospace;font-size:17.5px;line-height:31px;color:#3e3f42;transform:scaleY(1.13);transform-origin:0 19.5px;-webkit-text-stroke:0.2px currentColor">340</div>
<div class="mono" style="left:462.40px;top:182.16px"><span style="color:#d5b778">&lt;script&gt;</span></div>
<div class="a" style="left:300px;top:212.99px;width:60px;text-align:right;font-family:'Liberation Mono',monospace;font-size:17.5px;line-height:31px;color:#3e3f42;transform:scaleY(1.13);transform-origin:0 19.5px;-webkit-text-stroke:0.2px currentColor">490</div>
<div class="mono" style="left:462.40px;top:213.49px"><span style="color:#bcbec4">    </span><span style="color:#cf8e6d">function</span><span style="color:#bcbec4"> </span><span style="color:#56a8f5">installApp</span><span style="color:#bcbec4">() {</span></div>
<div class="a ui" style="left:788px;top:217px;font-size:17px;color:#7a7e85;font-weight:normal;">显示用法</div>
<div class="a" style="left:793px;top:241px;width:551px;height:30px;background:#243033;"></div>
<div class="a" style="left:838px;top:743px;width:426px;height:30px;background:#243033;"></div>
<div class="a" style="left:459px;top:241px;width:1px;height:32px;background:#313131;"></div>
<div class="a" style="left:504px;top:241px;width:1px;height:32px;background:#313131;"></div>
<div class="a" style="left:550px;top:241px;width:1px;height:32px;background:#313131;"></div>
<div class="a" style="left:459px;top:273px;width:1px;height:32px;background:#313131;"></div>
<div class="a" style="left:504px;top:273px;width:1px;height:32px;background:#313131;"></div>
<div class="a" style="left:550px;top:273px;width:1px;height:32px;background:#313131;"></div>
<div class="a" style="left:459px;top:304px;width:1px;height:32px;background:#313131;"></div>
<div class="a" style="left:504px;top:304px;width:1px;height:32px;background:#313131;"></div>
<div class="a" style="left:550px;top:304px;width:1px;height:32px;background:#313131;"></div>
<div class="a" style="left:459px;top:335px;width:1px;height:32px;background:#313131;"></div>
<div class="a" style="left:504px;top:335px;width:1px;height:32px;background:#313131;"></div>
<div class="a" style="left:550px;top:335px;width:1px;height:32px;background:#313131;"></div>
<div class="a" style="left:459px;top:367px;width:1px;height:32px;background:#313131;"></div>
<div class="a" style="left:504px;top:367px;width:1px;height:32px;background:#313131;"></div>
<div class="a" style="left:550px;top:367px;width:1px;height:32px;background:#313131;"></div>
<div class="a" style="left:459px;top:398px;width:1px;height:32px;background:#313131;"></div>
<div class="a" style="left:504px;top:398px;width:1px;height:32px;background:#313131;"></div>
<div class="a" style="left:550px;top:398px;width:1px;height:32px;background:#313131;"></div>
<div class="a" style="left:459px;top:429px;width:1px;height:32px;background:#313131;"></div>
<div class="a" style="left:504px;top:429px;width:1px;height:32px;background:#313131;"></div>
<div class="a" style="left:550px;top:429px;width:1px;height:32px;background:#313131;"></div>
<div class="a" style="left:459px;top:461px;width:1px;height:32px;background:#313131;"></div>
<div class="a" style="left:504px;top:461px;width:1px;height:32px;background:#313131;"></div>
<div class="a" style="left:550px;top:461px;width:1px;height:32px;background:#313131;"></div>
<div class="a" style="left:459px;top:492px;width:1px;height:32px;background:#313131;"></div>
<div class="a" style="left:504px;top:492px;width:1px;height:32px;background:#313131;"></div>
<div class="a" style="left:550px;top:492px;width:1px;height:32px;background:#313131;"></div>
<div class="a" style="left:459px;top:523px;width:1px;height:32px;background:#313131;"></div>
<div class="a" style="left:504px;top:523px;width:1px;height:32px;background:#313131;"></div>
<div class="a" style="left:550px;top:523px;width:1px;height:32px;background:#313131;"></div>
<div class="a" style="left:459px;top:555px;width:1px;height:32px;background:#313131;"></div>
<div class="a" style="left:504px;top:555px;width:1px;height:32px;background:#313131;"></div>
<div class="a" style="left:550px;top:555px;width:1px;height:32px;background:#313131;"></div>
<div class="a" style="left:459px;top:586px;width:1px;height:32px;background:#313131;"></div>
<div class="a" style="left:504px;top:586px;width:1px;height:32px;background:#313131;"></div>
<div class="a" style="left:550px;top:586px;width:1px;height:32px;background:#313131;"></div>
<div class="a" style="left:459px;top:617px;width:1px;height:32px;background:#313131;"></div>
<div class="a" style="left:504px;top:617px;width:1px;height:32px;background:#313131;"></div>
<div class="a" style="left:550px;top:617px;width:1px;height:32px;background:#313131;"></div>
<div class="a" style="left:459px;top:649px;width:1px;height:32px;background:#313131;"></div>
<div class="a" style="left:504px;top:649px;width:1px;height:32px;background:#313131;"></div>
<div class="a" style="left:550px;top:649px;width:1px;height:32px;background:#313131;"></div>
<div class="a" style="left:459px;top:680px;width:1px;height:32px;background:#313131;"></div>
<div class="a" style="left:504px;top:680px;width:1px;height:32px;background:#313131;"></div>
<div class="a" style="left:550px;top:680px;width:1px;height:32px;background:#313131;"></div>
<div class="a" style="left:459px;top:711px;width:1px;height:32px;background:#313131;"></div>
<div class="a" style="left:504px;top:711px;width:1px;height:32px;background:#313131;"></div>
<div class="a" style="left:550px;top:711px;width:1px;height:32px;background:#313131;"></div>
<div class="a" style="left:459px;top:743px;width:1px;height:32px;background:#313131;"></div>
<div class="a" style="left:504px;top:743px;width:1px;height:32px;background:#313131;"></div>
<div class="a" style="left:550px;top:743px;width:1px;height:32px;background:#313131;"></div>
<div class="a" style="left:596px;top:743px;width:1px;height:32px;background:#313131;"></div>
<div class="a" style="left:459px;top:774px;width:1px;height:32px;background:#313131;"></div>
<div class="a" style="left:504px;top:774px;width:1px;height:32px;background:#313131;"></div>
<div class="a" style="left:550px;top:774px;width:1px;height:32px;background:#313131;"></div>
<div class="a" style="left:596px;top:774px;width:1px;height:32px;background:#313131;"></div>
<div class="a" style="left:459px;top:805px;width:1px;height:32px;background:#313131;"></div>
<div class="a" style="left:504px;top:805px;width:1px;height:32px;background:#313131;"></div>
<div class="a" style="left:550px;top:805px;width:1px;height:32px;background:#313131;"></div>
<div class="a" style="left:596px;top:805px;width:1px;height:32px;background:#313131;"></div>
<div class="a" style="left:300px;top:243.84px;width:60px;text-align:right;font-family:'Liberation Mono',monospace;font-size:17.5px;line-height:31px;color:#3c3d40;transform:scaleY(1.13);transform-origin:0 19.5px;-webkit-text-stroke:0.2px currentColor">500</div>
<div class="mono" style="left:462.40px;top:244.34px"><span style="color:#bcbec4">            btn.</span><span style="color:#c77dbb">innerHTML</span><span style="color:#bcbec4"> = </span><span style="color:#6aab73">&#x27;</span><span style="color:#d5b778">&lt;i</span><span style="color:#bababa"> class</span><span style="color:#bcbec4">=</span><span style="color:#6aab73">&quot;fas fa-spinner fa-spin&quot;</span><span style="color:#d5b778">&gt;&lt;/i&gt;</span><span style="color:#bcbec4"> <span class="cjk" style="font-size:18.8px;font-weight:400">正在下载</span>...</span><span style="color:#6aab73">&#x27;</span><span style="color:#bcbec4">;</span></div>
<div class="a" style="left:300px;top:275.17px;width:60px;text-align:right;font-family:'Liberation Mono',monospace;font-size:17.5px;line-height:31px;color:#3c3d40;transform:scaleY(1.13);transform-origin:0 19.5px;-webkit-text-stroke:0.2px currentColor">501</div>
<div class="mono" style="left:462.40px;top:275.67px"><span style="color:#bcbec4">            btn.</span><span style="color:#c77dbb">classList</span><span style="color:#bcbec4">.</span><span style="color:#56a8f5">remove</span><span style="color:#bcbec4">(</span><span style="color:#6aab73">&#x27;pulse&#x27;</span><span style="color:#bcbec4">);</span></div>
<div class="a" style="left:300px;top:306.50px;width:60px;text-align:right;font-family:'Liberation Mono',monospace;font-size:17.5px;line-height:31px;color:#3c3d40;transform:scaleY(1.13);transform-origin:0 19.5px;-webkit-text-stroke:0.2px currentColor">502</div>
<div class="a" style="left:300px;top:337.82px;width:60px;text-align:right;font-family:'Liberation Mono',monospace;font-size:17.5px;line-height:31px;color:#3c3d40;transform:scaleY(1.13);transform-origin:0 19.5px;-webkit-text-stroke:0.2px currentColor">503</div>
<div class="mono" style="left:462.40px;top:338.32px"><span style="color:#7a7e85">            // <span class="cjk" style="font-size:18.4px;font-weight:300">构建下载</span>URL</span></div>
<div class="a" style="left:300px;top:369.15px;width:60px;text-align:right;font-family:'Liberation Mono',monospace;font-size:17.5px;line-height:31px;color:#3c3d40;transform:scaleY(1.13);transform-origin:0 19.5px;-webkit-text-stroke:0.2px currentColor">504</div>
<div class="mono" style="left:462.40px;top:369.65px"><span style="color:#bcbec4">            </span><span style="color:#cf8e6d">const</span><span style="color:#bcbec4"> downloadUrl = </span><span style="color:#6aab73">`/api/Download?AppName=</span><span style="color:#bcbec4">${</span><span style="color:#56a8f5">encodeURIComponent</span><span style="color:#bcbec4">(</span><span style="color:#c77dbb" class="i">appData</span><span style="color:#bcbec4">.</span><span style="color:#c77dbb" class="i">Name</span><span style="color:#bcbec4">)}</span><span style="color:#6aab73">`</span><span style="color:#bcbec4">;</span></div>
<div class="a" style="left:300px;top:400.49px;width:60px;text-align:right;font-family:'Liberation Mono',monospace;font-size:17.5px;line-height:31px;color:#3c3d40;transform:scaleY(1.13);transform-origin:0 19.5px;-webkit-text-stroke:0.2px currentColor">505</div>
<div class="a" style="left:300px;top:431.81px;width:60px;text-align:right;font-family:'Liberation Mono',monospace;font-size:17.5px;line-height:31px;color:#3c3d40;transform:scaleY(1.13);transform-origin:0 19.5px;-webkit-text-stroke:0.2px currentColor">506</div>
<div class="mono" style="left:462.40px;top:432.31px"><span style="color:#7a7e85">            // <span class="cjk" style="font-size:18.4px;font-weight:300">方法</span>1<span class="cjk" style="font-size:18.4px;font-weight:300">：创建隐藏的下载链接</span></span></div>
<div class="a" style="left:300px;top:463.14px;width:60px;text-align:right;font-family:'Liberation Mono',monospace;font-size:17.5px;line-height:31px;color:#3c3d40;transform:scaleY(1.13);transform-origin:0 19.5px;-webkit-text-stroke:0.2px currentColor">507</div>
<div class="mono" style="left:462.40px;top:463.64px"><span style="color:#bcbec4">            </span><span style="color:#cf8e6d">const</span><span style="color:#bcbec4"> downloadLink = </span><span style="color:#c77dbb" class="i">document</span><span style="color:#bcbec4">.</span><span style="color:#56a8f5">createElement</span><span style="color:#bcbec4">(</span><span style="color:#6aab73">&#x27;a&#x27;</span><span style="color:#bcbec4">);</span></div>
<div class="a" style="left:300px;top:494.48px;width:60px;text-align:right;font-family:'Liberation Mono',monospace;font-size:17.5px;line-height:31px;color:#3c3d40;transform:scaleY(1.13);transform-origin:0 19.5px;-webkit-text-stroke:0.2px currentColor">508</div>
<div class="mono" style="left:462.40px;top:494.98px"><span style="color:#bcbec4">            downloadLink.</span><span style="color:#c77dbb">href</span><span style="color:#bcbec4"> = downloadUrl;</span></div>
<div class="a" style="left:300px;top:525.80px;width:60px;text-align:right;font-family:'Liberation Mono',monospace;font-size:17.5px;line-height:31px;color:#3c3d40;transform:scaleY(1.13);transform-origin:0 19.5px;-webkit-text-stroke:0.2px currentColor">509</div>
<div class="mono" style="left:462.40px;top:526.30px"><span style="color:#bcbec4">            downloadLink.</span><span style="color:#c77dbb">style</span><span style="color:#bcbec4">.</span><span style="color:#c77dbb">display</span><span style="color:#bcbec4"> = </span><span style="color:#6aab73">&#x27;none&#x27;</span><span style="color:#bcbec4">;</span></div>
<div class="a" style="left:300px;top:557.13px;width:60px;text-align:right;font-family:'Liberation Mono',monospace;font-size:17.5px;line-height:31px;color:#3c3d40;transform:scaleY(1.13);transform-origin:0 19.5px;-webkit-text-stroke:0.2px currentColor">510</div>
<div class="mono" style="left:462.40px;top:557.63px"><span style="color:#bcbec4">            </span><span style="color:#c77dbb" class="i">document</span><span style="color:#bcbec4">.</span><span style="color:#c77dbb">body</span><span style="color:#bcbec4">.</span><span style="color:#56a8f5">appendChild</span><span style="color:#bcbec4">(downloadLink);</span></div>
<div class="a" style="left:300px;top:588.47px;width:60px;text-align:right;font-family:'Liberation Mono',monospace;font-size:17.5px;line-height:31px;color:#a9abaf;transform:scaleY(1.13);transform-origin:0 19.5px;-webkit-text-stroke:0.2px currentColor">511</div>
<div class="mono" style="left:462.40px;top:588.97px"><span style="color:#bcbec4">            downloadLink.</span><span style="color:#56a8f5">click</span><span style="color:#bcbec4">();</span></div>
<div class="a" style="left:300px;top:619.79px;width:60px;text-align:right;font-family:'Liberation Mono',monospace;font-size:17.5px;line-height:31px;color:#3c3d40;transform:scaleY(1.13);transform-origin:0 19.5px;-webkit-text-stroke:0.2px currentColor">512</div>
<div class="mono" style="left:462.40px;top:620.29px"><span style="color:#bcbec4">            </span><span style="color:#c77dbb" class="i">document</span><span style="color:#bcbec4">.</span><span style="color:#c77dbb">body</span><span style="color:#bcbec4">.</span><span style="color:#56a8f5">removeChild</span><span style="color:#bcbec4">(downloadLink);</span></div>
<div class="a" style="left:300px;top:651.12px;width:60px;text-align:right;font-family:'Liberation Mono',monospace;font-size:17.5px;line-height:31px;color:#3c3d40;transform:scaleY(1.13);transform-origin:0 19.5px;-webkit-text-stroke:0.2px currentColor">513</div>
<div class="a" style="left:300px;top:682.46px;width:60px;text-align:right;font-family:'Liberation Mono',monospace;font-size:17.5px;line-height:31px;color:#3c3d40;transform:scaleY(1.13);transform-origin:0 19.5px;-webkit-text-stroke:0.2px currentColor">514</div>
<div class="mono" style="left:462.40px;top:682.96px"><span style="color:#7a7e85">            // <span class="cjk" style="font-size:18.4px;font-weight:300">延迟更新按钮状态，给下载一些时间</span></span></div>
<div class="a" style="left:300px;top:713.78px;width:60px;text-align:right;font-family:'Liberation Mono',monospace;font-size:17.5px;line-height:31px;color:#3c3d40;transform:scaleY(1.13);transform-origin:0 19.5px;-webkit-text-stroke:0.2px currentColor">515</div>
<div class="mono" style="left:462.40px;top:714.28px"><span style="color:#bcbec4">            </span><span style="color:#56a8f5">setTimeout</span><span style="color:#bcbec4">(() =&gt; {</span></div>
<div class="a" style="left:300px;top:745.12px;width:60px;text-align:right;font-family:'Liberation Mono',monospace;font-size:17.5px;line-height:31px;color:#3c3d40;transform:scaleY(1.13);transform-origin:0 19.5px;-webkit-text-stroke:0.2px currentColor">516</div>
<div class="mono" style="left:462.40px;top:745.62px"><span style="color:#bcbec4">                btn.</span><span style="color:#c77dbb">innerHTML</span><span style="color:#bcbec4"> = </span><span style="color:#6aab73">&#x27;</span><span style="color:#d5b778">&lt;i</span><span style="color:#bababa"> class</span><span style="color:#bcbec4">=</span><span style="color:#6aab73">&quot;fas fa-check&quot;</span><span style="color:#d5b778">&gt;&lt;/i&gt;</span><span style="color:#bcbec4"> <span class="cjk" style="font-size:18.8px;font-weight:400">下载已开始</span></span><span style="color:#6aab73">&#x27;</span><span style="color:#bcbec4">;</span></div>
<div class="a" style="left:300px;top:776.45px;width:60px;text-align:right;font-family:'Liberation Mono',monospace;font-size:17.5px;line-height:31px;color:#3c3d40;transform:scaleY(1.13);transform-origin:0 19.5px;-webkit-text-stroke:0.2px currentColor">517</div>
<div class="mono" style="left:462.40px;top:776.95px"><span style="color:#bcbec4">                btn.</span><span style="color:#c77dbb">style</span><span style="color:#bcbec4">.</span><span style="color:#c77dbb">background</span><span style="color:#bcbec4"> = </span><span style="color:#6aab73">&#x27;linear-gradient(to right, #4cd964, #2dbb5f)&#x27;</span><span style="color:#bcbec4">;</span></div>
<div class="a" style="left:300px;top:807.77px;width:60px;text-align:right;font-family:'Liberation Mono',monospace;font-size:17.5px;line-height:31px;color:#3c3d40;transform:scaleY(1.13);transform-origin:0 19.5px;-webkit-text-stroke:0.2px currentColor">518</div>
<div class="a" style="left:1828px;top:243px;width:1px;height:592px;background:#2f2f2f;"></div>
<svg style="left:474px;top:590px;" width="16" height="22" viewBox="0 0 16 22"><path d="M8 1 A6.5 6.5 0 0 1 12 13 L12 15 L4 15 L4 13 A6.5 6.5 0 0 1 8 1Z" fill="#f2c55c"/><rect x="4.5" y="16" width="7" height="1.8" fill="#cfd1d5"/><rect x="5" y="19" width="6" height="1.8" fill="#cfd1d5"/></svg>
<div class="a" style="left:1890px;top:162px;width:20px;height:3px;background:#d9a343;"></div>
<div class="a" style="left:1890px;top:272px;width:20px;height:3px;background:#d9a343;"></div>
<div class="a" style="left:1890px;top:422px;width:20px;height:3px;background:#d9a343;"></div>
<div class="a" style="left:1890px;top:429px;width:20px;height:3px;background:#d9a343;"></div>
<div class="a" style="left:1890px;top:589px;width:20px;height:3px;background:#d9a343;"></div>
<div class="a" style="left:1890px;top:598px;width:20px;height:3px;background:#d9a343;"></div>
<svg style="left:1768px;top:127px;" width="17" height="15" viewBox="0 0 17 15"><path d="M8.5 0.5 L16.5 14.5 L0.5 14.5 Z" fill="#e8b24a" stroke="#e8b24a" stroke-width="1" stroke-linejoin="round"/><rect x="7.6" y="4.5" width="1.8" height="5.5" fill="#2a1d00"/><rect x="7.6" y="11.2" width="1.8" height="1.8" fill="#2a1d00"/></svg>
<div class="a ui" style="left:1787px;top:126px;font-size:17px;color:#a8aaae;font-weight:normal;">7</div>
<svg style="left:1811px;top:127px;" width="17" height="15" viewBox="0 0 17 15"><path d="M8.5 0.5 L16.5 14.5 L0.5 14.5 Z" fill="#a8875a" stroke="#a8875a" stroke-width="1" stroke-linejoin="round"/><rect x="7.6" y="4.5" width="1.8" height="5.5" fill="#2a1d00"/><rect x="7.6" y="11.2" width="1.8" height="1.8" fill="#2a1d00"/></svg>
<div class="a ui" style="left:1830px;top:126px;font-size:17px;color:#a8aaae;font-weight:normal;">7</div>
<svg style="left:1857px;top:131px;" width="12" height="7" viewBox="0 0 12 7"><polyline points="1,6 6,1 11,6" fill="none" stroke="#a8aaae" stroke-width="1.6"/></svg>
<svg style="left:1887px;top:131px;" width="12" height="7" viewBox="0 0 12 7"><polyline points="1,1 6,6 11,1" fill="none" stroke="#a8aaae" stroke-width="1.6"/></svg>
<div class="a" style="left:1897px;top:738px;width:11px;height:50px;border-radius:3px;background:#424242"></div>
<div class="a" style="left:1910px;top:58px;width:55px;height:1313px;background:#2a2a2a;"></div>
<div class="a" style="left:1910px;top:58px;width:1px;height:1313px;background:#1f1f1f;"></div>
<svg style="left:1927px;top:73px;" width="26" height="28" viewBox="0 0 26 28"><path d="M13 2 Q5 2 5 11 L5 18 L2 22 L24 22 L21 18 L21 11 Q21 2 13 2Z" fill="none" stroke="#cfd1d5" stroke-width="2" stroke-linejoin="round"/><path d="M10 25 Q13 28 16 25" fill="none" stroke="#cfd1d5" stroke-width="2"/></svg>
<svg style="left:1928px;top:132px;" width="28" height="27" viewBox="0 0 28 27"><g fill="none" stroke="#cfd1d5" stroke-width="2" stroke-linecap="round"><path d="M3 19 Q1 9 9 4.5 Q15 2 20 7"/><path d="M7 17 Q6 11 11 9 Q14 8 16 10"/><path d="M13 13 L25 13 L25 25 L21 22 L13 22 Z" stroke-linejoin="round"/></g></svg>
<svg style="left:1929px;top:186px;" width="24" height="28" viewBox="0 0 24 28"><g fill="none" stroke="#cfd1d5" stroke-width="2"><ellipse cx="12" cy="5" rx="10" ry="4"/><path d="M2 5 L2 23 Q12 29 22 23 L22 5"/><path d="M2 11 Q12 17 22 11"/><path d="M2 17 Q12 23 22 17"/></g></svg>
<div class="a" style="left:59px;top:835px;width:1851px;height:2px;background:#1f1f1f;"></div>
<div class="a" style="left:59px;top:837px;width:1851px;height:58px;background:#2a2a2a;"></div>
<div class="a" style="left:59px;top:895px;width:1851px;height:1px;background:#222222;"></div>
<div class="a" style="left:59px;top:896px;width:1851px;height:49px;background:#2a2a2e;"></div>
<div class="a ui" style="left:76px;top:857px;font-size:18px;color:#dfe1e5;font-weight:bold;">调试</div>
<svg style="left:150px;top:851px;" width="28" height="30" viewBox="0 0 28 30"><path d="M3 5 L6 6.5 L11 6.5 L14 5 L13.5 9 L13.5 28 L3.5 28 L3.5 9 Z" fill="#3d559c"/><circle cx="6.3" cy="11.5" r="2.2" fill="#9aa6d8"/><circle cx="10.9" cy="11.5" r="2.2" fill="#9aa6d8"/><path d="M13 17 L24 23.5 L13 30Z" fill="#2a2a2a" stroke="#6d6f73" stroke-width="1.8" stroke-linejoin="round"/><circle cx="20.5" cy="5.5" r="5" fill="#4cb85c"/></svg>
<div class="a ui" style="left:178px;top:856px;font-size:19px;color:#dfe1e5;font-weight:normal;">go build Download</div>
<svg style="left:354px;top:861px;" width="11" height="11" viewBox="0 0 11 11"><line x1="1" y1="1" x2="10" y2="10" stroke="#8a8c90" stroke-width="1.7"/><line x1="10" y1="1" x2="1" y2="10" stroke="#8a8c90" stroke-width="1.7"/></svg>
<div class="a" style="left:133px;top:891px;width:248px;height:4px;background:#4e4f54;"></div>
<svg style="left:76px;top:907px;" width="24" height="26" viewBox="0 0 24 26"><path d="M17 4 A8.5 8.5 0 1 0 8 19" fill="none" stroke="#cfd1d5" stroke-width="2"/><polyline points="12,1 17,4 14,9" fill="none" stroke="#cfd1d5" stroke-width="2"/><ellipse cx="17" cy="19" rx="3.5" ry="4.5" fill="#4cb85c"/></svg>
<svg style="left:115px;top:910px;" width="19" height="19" viewBox="0 0 19 19"><rect x="1" y="1" width="17" height="17" rx="2" fill="#7a2326" stroke="#e05555" stroke-width="2"/></svg>
<div class="a" style="left:147px;top:905px;width:1px;height:30px;background:#3a3a3a;"></div>
<svg style="left:161px;top:909px;" width="22" height="20" viewBox="0 0 22 20"><rect x="0" y="1" width="5" height="18" fill="#6d6f73"/><path d="M8 1 L21 10 L8 19Z" fill="#6d6f73"/></svg>
<svg style="left:200px;top:909px;" width="16" height="20" viewBox="0 0 16 20"><rect x="1" y="1" width="4.5" height="18" rx="1" fill="none" stroke="#e0e2e6" stroke-width="1.8"/><rect x="10" y="1" width="4.5" height="18" rx="1" fill="none" stroke="#e0e2e6" stroke-width="1.8"/></svg>
<svg style="left:234px;top:908px;" width="22" height="24" viewBox="0 0 22 24"><path d="M2 11 Q8 3 13 10 L18 8" fill="none" stroke="#55575b" stroke-width="1.8"/><polyline points="14,5 18,8 15,12" fill="none" stroke="#55575b" stroke-width="1.8"/><line x1="1" y1="20" x2="21" y2="20" stroke="#55575b" stroke-width="1.8"/></svg>
<svg style="left:272px;top:907px;" width="20" height="26" viewBox="0 0 20 26"><line x1="10" y1="1" x2="10" y2="16" stroke="#55575b" stroke-width="1.8"/><polyline points="4,10 10,16 16,10" fill="none" stroke="#55575b" stroke-width="1.8"/><line x1="1" y1="22" x2="19" y2="22" stroke="#55575b" stroke-width="1.8"/></svg>
<svg style="left:309px;top:907px;" width="20" height="26" viewBox="0 0 20 26"><line x1="10" y1="4" x2="10" y2="18" stroke="#55575b" stroke-width="1.8"/><polyline points="4,10 10,4 16,10" fill="none" stroke="#55575b" stroke-width="1.8"/><line x1="1" y1="22" x2="19" y2="22" stroke="#55575b" stroke-width="1.8"/></svg>
<div class="a" style="left:342px;top:905px;width:1px;height:30px;background:#3a3a3a;"></div>
<svg style="left:354px;top:908px;" width="24" height="22" viewBox="0 0 24 22"><circle cx="8.5" cy="13" r="7" fill="none" stroke="#e05555" stroke-width="2.2"/><path d="M9 6 A7 7 0 1 1 15.5 15" fill="none" stroke="#e05555" stroke-width="2.2"/></svg>
<svg style="left:392px;top:908px;" width="22" height="22" viewBox="0 0 22 22"><circle cx="11" cy="11" r="7.5" fill="none" stroke="#e05555" stroke-width="2.2"/><line x1="1" y1="21" x2="21" y2="1" stroke="#cfd1d5" stroke-width="1.8"/></svg>
<svg style="left:436px;top:909px;" width="6" height="20" viewBox="0 0 6 20"><g fill="#cfd1d5"><circle cx="3" cy="2.5" r="2"/><circle cx="3" cy="10" r="2"/><circle cx="3" cy="17.5" r="2"/></g></svg>
<div class="a ui" style="left:493px;top:912px;font-size:17.5px;color:#dfe1e5;font-weight:normal;">线程和变量</div>
<div class="a ui" style="left:613px;top:912px;font-size:17.5px;color:#dfe1e5;font-weight:normal;">控制台</div>
<div class="a" style="left:597px;top:940px;width:87px;height:4px;background:#4e4f54;"></div>
<svg style="left:1885px;top:910px;" width="19" height="19" viewBox="0 0 19 19"><rect x="1" y="1" width="17" height="17" rx="1.5" fill="none" stroke="#cfd1d5" stroke-width="1.8"/><line x1="8" y1="1" x2="8" y2="18" stroke="#cfd1d5" stroke-width="1.8"/><line x1="8" y1="9.5" x2="18" y2="9.5" stroke="#cfd1d5" stroke-width="1.8"/></svg>
<div class="a" style="left:59px;top:945px;width:56px;height:426px;background:#29282d;"></div>
<div class="a" style="left:115px;top:945px;width:1795px;height:426px;background:#1e1e1e;"></div>
<div class="a" style="left:114px;top:945px;width:14px;height:426px;background:#202023;"></div>
<svg style="left:79px;top:961px;" width="14" height="18" viewBox="0 0 14 18"><line x1="7" y1="2" x2="7" y2="17" stroke="#4a4c50" stroke-width="1.8"/><polyline points="1,8 7,2 13,8" fill="none" stroke="#4a4c50" stroke-width="1.8"/></svg>
<svg style="left:79px;top:998px;" width="14" height="18" viewBox="0 0 14 18"><line x1="7" y1="1" x2="7" y2="16" stroke="#4a4c50" stroke-width="1.8"/><polyline points="1,10 7,16 13,10" fill="none" stroke="#4a4c50" stroke-width="1.8"/></svg>
<svg style="left:75px;top:1036px;" width="22" height="20" viewBox="0 0 22 20"><g fill="none" stroke="#cfd1d5" stroke-width="1.8"><line x1="1" y1="2" x2="21" y2="2"/><path d="M1 9 L17 9 Q21 9 21 12.5 Q21 16 17 16 L11 16"/><polyline points="14,13 11,16 14,19"/><line x1="1" y1="16" x2="7" y2="16"/></g></svg>
<svg style="left:75px;top:1071px;" width="22" height="22" viewBox="0 0 22 22"><g fill="none" stroke="#cfd1d5" stroke-width="1.8"><line x1="1" y1="3" x2="8" y2="3"/><line x1="1" y1="10" x2="8" y2="10"/><line x1="15" y1="1" x2="15" y2="14"/><polyline points="10,9 15,14 20,9"/><line x1="1" y1="19" x2="21" y2="19"/></g></svg>
<svg style="left:76px;top:1108px;" width="20" height="20" viewBox="0 0 20 20"><g fill="none" stroke="#cfd1d5" stroke-width="1.8"><rect x="4" y="1" width="12" height="6"/><rect x="1" y="7" width="18" height="8" rx="1.5"/><rect x="5" y="12" width="10" height="7"/></g></svg>
<svg style="left:78px;top:1144px;" width="17" height="21" viewBox="0 0 17 21"><g fill="none" stroke="#cfd1d5" stroke-width="1.8"><line x1="0" y1="4" x2="17" y2="4"/><path d="M5.5 4 L5.5 1 L11.5 1 L11.5 4"/><path d="M2 4 L3 20 L14 20 L15 4"/><line x1="6.5" y1="8" x2="6.5" y2="16"/><line x1="10.5" y1="8" x2="10.5" y2="16"/></g></svg>
<div class="mono" style="left:129.5px;top:943.00px;color:#bcbec4">File upload successful: platform=Apple, UniqueId=9979523943, SortID=235, size=524288, source IP: 139.205.1.56</div>
<div class="mono" style="left:129.5px;top:974.33px;color:#bcbec4">session refreshed successfully, validity extended to 21:34:47</div>
<div class="mono" style="left:129.5px;top:1005.66px;color:#bcbec4">File upload successful: platform=Apple, UniqueId=9979523943, SortID=236, size=524288, source IP: 139.205.1.56</div>
<div class="mono" style="left:129.5px;top:1036.99px;color:#bcbec4">session refreshed successfully, validity extended to 21:34:47</div>
<div class="mono" style="left:129.5px;top:1068.32px;color:#bcbec4">File upload successful: platform=Apple, UniqueId=9979523943, SortID=237, size=524288, source IP: 139.205.1.56</div>
<div class="mono" style="left:129.5px;top:1099.65px;color:#bcbec4">session refreshed successfully, validity extended to 21:34:47</div>
<div class="mono" style="left:129.5px;top:1130.98px;color:#bcbec4">File upload successful: platform=Apple, UniqueId=9979523943, SortID=238, size=524288, source IP: 139.205.1.56</div>
<div class="mono" style="left:129.5px;top:1162.31px;color:#bcbec4">session refreshed successfully, validity extended to 21:34:47</div>
<div class="mono" style="left:129.5px;top:1193.64px;color:#bcbec4">File upload successful: platform=Apple, UniqueId=9979523943, SortID=239, size=524288, source IP: 139.205.1.56</div>
<div class="mono" style="left:129.5px;top:1224.97px;color:#bcbec4">session refreshed successfully, validity extended to 21:34:47</div>
<div class="mono" style="left:129.5px;top:1256.30px;color:#bcbec4">File upload successful: platform=Apple, UniqueId=9979523943, SortID=240, size=524288, source IP: 139.205.1.56</div>
<div class="mono" style="left:129.5px;top:1287.63px;color:#bcbec4">session refreshed successfully, validity extended to 21:34:47</div>
<div class="a" style="left:131px;top:1354px;width:818px;height:11px;background:#424242"></div>
<div class="a" style="left:1897px;top:1329px;width:11px;height:40px;background:#424242"></div>
</body>
</html>
